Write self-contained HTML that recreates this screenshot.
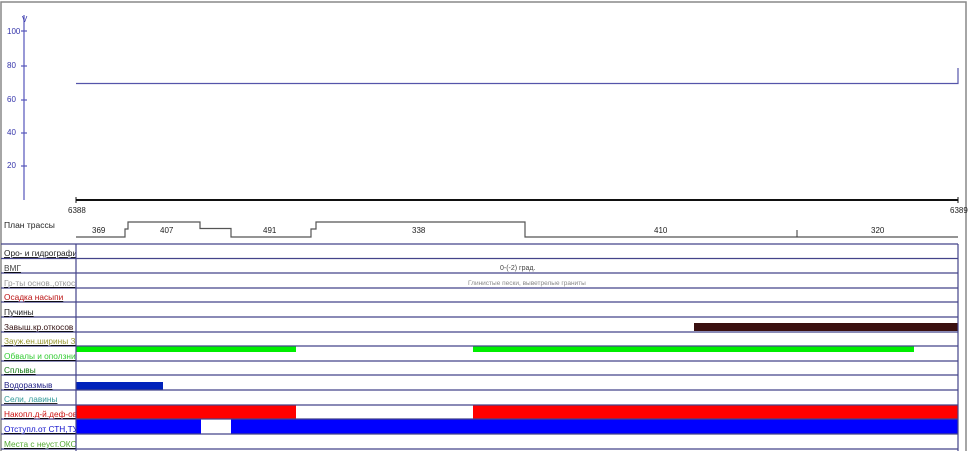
<!DOCTYPE html>
<html><head><meta charset="utf-8"><style>
body{margin:0;width:970px;height:451px;background:#fff;overflow:hidden;font-family:"Liberation Sans",sans-serif}
svg{display:block}
</style></head><body>
<svg width="970" height="451" xmlns="http://www.w3.org/2000/svg" font-family="Liberation Sans, sans-serif">
<defs><clipPath id="c"><rect x="0" y="240" width="75.5" height="220"/></clipPath></defs>
<rect x="1" y="2" width="965" height="460" fill="none" stroke="#888" stroke-width="1.5"/>
<g stroke="#5555bb" stroke-width="1.2">
<line x1="24" y1="15" x2="24" y2="200"/>
<line x1="21" y1="31" x2="27" y2="31"/><line x1="21" y1="66" x2="27" y2="66"/>
<line x1="21" y1="100" x2="27" y2="100"/><line x1="21" y1="133" x2="27" y2="133"/>
<line x1="21" y1="166" x2="27" y2="166"/>
</g>
<g fill="#3333aa" font-size="8">
<text x="22" y="22">V</text>
<text x="7" y="34">100</text><text x="7" y="68">80</text><text x="7" y="102">60</text>
<text x="7" y="135">40</text><text x="7" y="168">20</text>
</g>
<polyline points="76,83.5 958,83.5 958,68" fill="none" stroke="#5555aa" stroke-width="1.2"/>
<line x1="76" y1="200" x2="958" y2="200" stroke="#111" stroke-width="2"/>
<line x1="76" y1="197" x2="76" y2="203" stroke="#111"/><line x1="958" y1="197" x2="958" y2="203" stroke="#111"/>
<g font-size="8" fill="#222"><text x="68" y="213">6388</text><text x="950" y="213">6389</text>
<text x="4" y="228" font-size="8.5">План трассы</text>
<text x="92" y="233">369</text><text x="160" y="233">407</text><text x="263" y="233">491</text>
<text x="412" y="233">338</text><text x="654" y="233">410</text><text x="871" y="233">320</text></g>
<polyline points="76,237 125,237 125,229 128,229 128,222 200,222 200,228.5 231,228.5 231,237 311,237 311,229 316,229 316,222 525,222 525,237 958,237" fill="none" stroke="#555" stroke-width="1.2"/>
<line x1="797" y1="230" x2="797" y2="237" stroke="#333"/>
<rect x="694" y="323" width="264" height="8" fill="#3a1010"/>
<rect x="76" y="346" width="220" height="6" fill="#00ee00"/>
<rect x="473" y="346" width="441" height="6" fill="#00ee00"/>
<rect x="76" y="382" width="87" height="8" fill="#0022bb"/>
<rect x="76" y="405" width="220" height="14" fill="#ff0000"/>
<rect x="473" y="405" width="485" height="14" fill="#ff0000"/>
<rect x="76" y="419" width="125" height="15" fill="#0000ff"/>
<rect x="231" y="419" width="727" height="15" fill="#0000ff"/>
<g stroke="#44448a" stroke-width="1.2" fill="none">
<line x1="1" y1="244" x2="958" y2="244"/>
<line x1="1" y1="258.5" x2="958" y2="258.5"/><line x1="1" y1="273" x2="958" y2="273"/>
<line x1="1" y1="288" x2="958" y2="288"/><line x1="1" y1="302" x2="958" y2="302"/>
<line x1="1" y1="317" x2="958" y2="317"/><line x1="1" y1="332" x2="958" y2="332"/>
<line x1="1" y1="346" x2="958" y2="346"/><line x1="1" y1="361" x2="958" y2="361"/>
<line x1="1" y1="375" x2="958" y2="375"/><line x1="1" y1="390" x2="958" y2="390"/>
<line x1="1" y1="405" x2="958" y2="405"/><line x1="1" y1="419" x2="958" y2="419"/>
<line x1="1" y1="434" x2="958" y2="434"/><line x1="1" y1="449" x2="958" y2="449"/>
<line x1="76" y1="244" x2="76" y2="451"/><line x1="958" y1="244" x2="958" y2="451"/>
</g>
<g font-size="8.3" text-decoration="underline" clip-path="url(#c)">
<text x="4" y="256" fill="#222">Оро- и гидрография</text>
<text x="4" y="271" fill="#444">ВМГ</text>
<text x="4" y="286" fill="#999">Гр-ты основ.,откос</text>
<text x="4" y="300" fill="#bb1111">Осадка насыпи</text>
<text x="4" y="315" fill="#222">Пучины</text>
<text x="4" y="330" fill="#331111">Завыш.кр.откосов</text>
<text x="4" y="344" fill="#999933">Зауж.ен.ширины ЗП</text>
<text x="4" y="359" fill="#33cc33">Обвалы и оползни</text>
<text x="4" y="373" fill="#117711">Сплывы</text>
<text x="4" y="388" fill="#222288">Водоразмыв</text>
<text x="4" y="402" fill="#339999">Сели, лавины</text>
<text x="4" y="417" fill="#cc1111">Накопл.д-й.деф-ов.</text>
<text x="4" y="432" fill="#1111cc">Отступл.от СТН,ТУ</text>
<text x="4" y="447" fill="#55aa33">Места с неуст.ОКС</text>
</g>
<text x="500" y="270" font-size="7" fill="#444">0-(-2) град.</text>
<text x="468" y="285" font-size="6.5" fill="#888">Глинистые пески, выветрелые граниты</text>
</svg>
</body></html>
